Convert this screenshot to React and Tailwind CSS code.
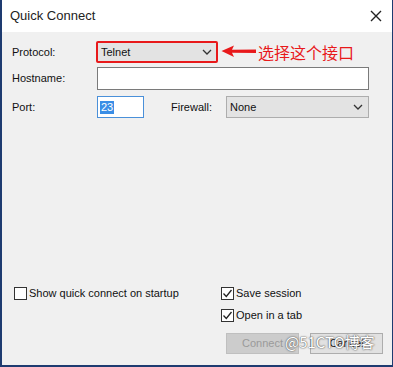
import React from 'react'

const font = { fontFamily: '"Liberation Sans", Arial, sans-serif' }

const Chevron = () => (
    <svg width="10" height="6" viewBox="0 0 10 6" className="shrink-0">
        <path d="M1 1 L5 5 L9 1" fill="none" stroke="#333" strokeWidth="1.3" />
    </svg>
)

const Check = ({ checked, label }) => (
    <div className="flex items-center h-[14px]">
        <div className="w-[13px] h-[13px] border border-[#333] bg-white flex items-center justify-center">
            {checked && (
                <svg width="11" height="11" viewBox="0 0 11 11">
                    <path d="M1.5 5.5 L4.3 8.5 L9.5 2" fill="none" stroke="#222" strokeWidth="1.3" />
                </svg>
            )}
        </div>
        <span className="ml-[2px] text-[11px] text-[#111]">{label}</span>
    </div>
)

const App = () => {
    return (
        <div className="w-[393px] h-[367px] bg-[#1e3b70] pl-[2px] pb-[2px] pr-[1px] overflow-hidden" style={font}>
            <div className="w-full h-full bg-[#f0f0f0] flex flex-col relative">
                {/* title bar */}
                <div className="h-[32px] bg-white flex items-center justify-between pl-[8px] pr-[10px] shrink-0">
                    <span className="text-[13px] text-[#222]">Quick Connect</span>
                    <svg width="12" height="12" viewBox="0 0 12 12">
                        <path d="M1 1 L11 11 M11 1 L1 11" stroke="#222" strokeWidth="1.4" />
                    </svg>
                </div>

                <div className="pl-[10px] pt-[9px] flex flex-col">
                    {/* protocol */}
                    <div className="flex items-center h-[22px]">
                        <span className="w-[84px] text-[11px] text-[#111]">Protocol:</span>
                        <div className="w-[122px] h-[22px] border-2 border-[#e8191b] rounded-[2px] bg-[#e3e3e3] flex items-center justify-between pl-[3px] pr-[4px]">
                            <span className="text-[11px] text-[#111]">Telnet</span>
                            <Chevron />
                        </div>
                        <svg width="36" height="14" viewBox="0 0 36 14" className="ml-[3px]">
                            <path d="M0.5 6 L13 0.5 L11 4.8 L35 4.5 L35 8 L11 7.8 L13 12 Z" fill="#e8191b" />
                        </svg>
                        <span className="ml-[1px] text-[16px] text-[#e8191b] leading-none" style={{ fontFamily: '"Noto Sans CJK SC", sans-serif' }}>选择这个接口</span>
                    </div>

                    {/* hostname */}
                    <div className="flex items-center h-[23px] mt-[4px]">
                        <span className="w-[85px] text-[11px] text-[#111]">Hostname:</span>
                        <div className="w-[272px] h-[23px] border border-[#7a7a7a] bg-white" />
                    </div>

                    {/* port / firewall */}
                    <div className="flex items-center h-[22px] mt-[6px]">
                        <span className="w-[85px] text-[11px] text-[#111]">Port:</span>
                        <div className="w-[47px] h-[22px] border border-[#4a90d9] bg-white flex items-center pl-[2px]">
                            <span className="bg-[#3a8ee6] text-white text-[11px] px-[1px] leading-[13px]">23</span>
                        </div>
                        <span className="ml-[27px] w-[55px] text-[11px] text-[#111]">Firewall:</span>
                        <div className="w-[143px] h-[22px] border border-[#adadad] bg-[#e3e3e3] flex items-center justify-between pl-[3px] pr-[5px]">
                            <span className="text-[11px] text-[#111]">None</span>
                            <Chevron />
                        </div>
                    </div>
                </div>

                {/* options */}
                <div className="flex mt-[168px] pl-[12px]">
                    <div className="w-[207px]">
                        <Check label="Show quick connect on startup" />
                    </div>
                    <div className="flex flex-col gap-[8px]">
                        <Check checked label="Save session" />
                        <Check checked label="Open in a tab" />
                    </div>
                </div>

                {/* buttons */}
                <div className="flex justify-end gap-[11px] pr-[9px] mt-[11px]">
                    <div className="w-[73px] h-[21px] border border-[#bfbfbf] bg-[#cccccc] flex items-center justify-center text-[11px] text-[#9a9a9a]">Connect</div>
                    <div className="w-[73px] h-[21px] border border-[#adadad] bg-[#e1e1e1] flex items-center justify-center text-[11px] text-[#111]">Cancel</div>
                </div>

                {/* watermark */}
                <span
                    className="absolute left-[283px] top-[334px] text-[15px] text-white leading-none"
                    style={{ fontFamily: '"Noto Sans CJK SC", sans-serif', textShadow: '0 0 2px #555, 0 0 1px #555' }}
                >
                    @51CTO博客
                </span>
            </div>
        </div>
    )
}

export default App
